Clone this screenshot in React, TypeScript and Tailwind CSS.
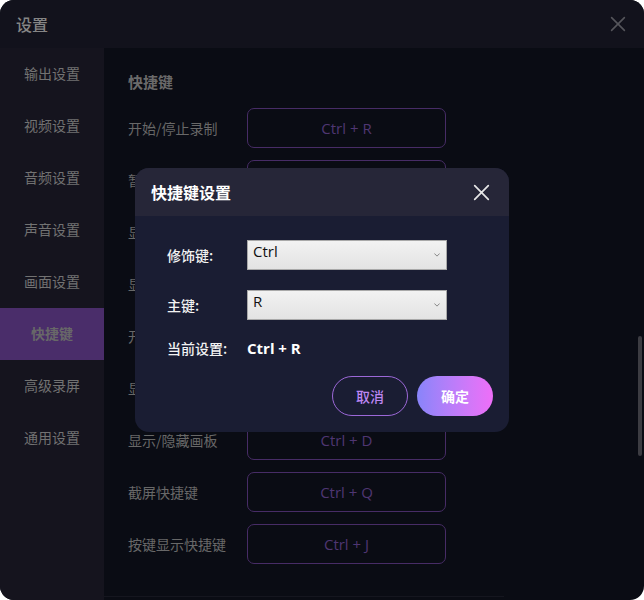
import React from "react";

const navItems = ["输出设置", "视频设置", "音频设置", "声音设置", "画面设置", "快捷键", "高级录屏", "通用设置"];

const rows: [string, string][] = [
  ["开始/停止录制", "Ctrl + R"],
  ["暂停/恢复录制", "Ctrl + P"],
  ["显示/隐藏主窗口", "Ctrl + H"],
  ["显示/隐藏摄像头", "Ctrl + W"],
  ["开启/关闭画笔", "Ctrl + B"],
  ["显示/隐藏鼠标", "Ctrl + M"],
  ["显示/隐藏画板", "Ctrl + D"],
  ["截屏快捷键", "Ctrl + Q"],
  ["按键显示快捷键", "Ctrl + J"],
];

const font = { fontFamily: '"Noto Sans CJK SC", "Noto Sans", sans-serif' };
const latin = { fontFamily: '"Open Sans", "Noto Sans", sans-serif' };

function XIcon({ className }: { className?: string }) {
  return (
    <svg viewBox="0 0 20 20" className={className} fill="none" stroke="currentColor" strokeWidth="2" strokeLinecap="round">
      <path d="M2 2 L18 18 M18 2 L2 18" />
    </svg>
  );
}

function Select({ value }: { value: string }) {
  return (
    <div className="w-[200px] h-[30px] border border-[#a9a9a9] bg-gradient-to-b from-[#f2f2f2] to-[#e3e3e3] flex items-start justify-between pl-[5px] pr-[6px]">
      <span className="text-[15px] leading-[22px] text-[#111] mt-[-1px]" style={latin}>{value}</span>
      <svg viewBox="0 0 8 5" className="w-[6px] h-[4px] mt-[12px] text-[#666]" fill="none" stroke="currentColor" strokeWidth="1">
        <path d="M0.5 0.5 L4 4 L7.5 0.5" />
      </svg>
    </div>
  );
}

export default function App() {
  return (
    <div className="w-[644px] h-[600px] bg-white" style={font}>
      <div className="relative w-[644px] h-[600px] rounded-[14px] overflow-hidden flex flex-col bg-[#0a0c14]">
        <div className="h-[48px] shrink-0 bg-[#12121c] flex items-center justify-between pl-[16px] pr-[18px]">
          <span className="text-[16px] text-[#858585] font-medium">设置</span>
          <XIcon className="w-[16px] h-[16px] text-[#55555b]" />
        </div>
        <div className="flex flex-1 min-h-0">
          <div className="w-[104px] shrink-0 bg-[#15141e] flex flex-col">
            {navItems.map((n) => (
              <div
                key={n}
                className={
                  "h-[52px] flex items-center justify-center text-[14px] pb-[2px] " +
                  (n === "快捷键" ? "bg-[#4a2d6a] text-[#686868] font-bold" : "text-[#727272]")
                }
              >
                {n}
              </div>
            ))}
          </div>
          <div className="relative flex-1 pl-[24px] pt-[22px]">
            <div className="text-[15px] font-bold text-[#6a6a6a] leading-[24px]">快捷键</div>
            <div className="mt-[14px] flex flex-col gap-[12px]">
              {rows.map(([l, v]) => (
                <div key={l} className="flex items-center h-[40px]">
                  <span className="w-[119px] text-[14px] text-[#686868]">{l}</span>
                  <div className="w-[199px] h-[40px] rounded-[7px] border border-[#472c66] flex items-center justify-center text-[15px] text-[#4f3672]" style={latin}>
                    {v}
                  </div>
                </div>
              ))}
            </div>
            <div className="absolute left-0 bottom-[3px] w-[400px] h-px bg-[#15161f]" />
            <div className="absolute right-[2px] top-[288px] w-[4px] h-[120px] rounded-full bg-[#3c3c42]" />
          </div>
        </div>

        <div className="absolute left-[135px] top-[168px] w-[374px] h-[264px] rounded-[14px] overflow-hidden bg-[#1a1d33] flex flex-col">
          <div className="h-[48px] shrink-0 bg-[#262638] flex items-center justify-between pl-[16px] pr-[19px]">
            <span className="text-[16px] font-bold text-white">快捷键设置</span>
            <XIcon className="w-[17px] h-[17px] text-[#e6e6e6]" />
          </div>
          <div className="flex flex-col pl-[32px] pt-[24px]">
            <div className="flex items-center">
              <span className="w-[80px] text-[14px] text-[#f2f2f2] font-medium">修饰键:</span>
              <Select value="Ctrl" />
            </div>
            <div className="flex items-center mt-[20px]">
              <span className="w-[80px] text-[14px] text-[#f2f2f2] font-medium">主键:</span>
              <Select value="R" />
            </div>
            <div className="flex items-center mt-[18px] h-[20px]">
              <span className="w-[80px] text-[14px] text-[#f2f2f2] font-medium">当前设置:</span>
              <span className="text-[15px] font-bold text-white" style={latin}>Ctrl + R</span>
            </div>
            <div className="flex justify-end gap-[9px] pr-[16px] mt-[18px]">
              <button className="w-[76px] h-[40px] rounded-full border border-[#9c68d8] text-[#bd86f2] text-[14px] font-medium">取消</button>
              <button className="w-[76px] h-[40px] rounded-full bg-gradient-to-r from-[#8884fa] to-[#ee6ef8] text-white text-[14px] font-bold">确定</button>
            </div>
          </div>
        </div>
      </div>
    </div>
  );
}
